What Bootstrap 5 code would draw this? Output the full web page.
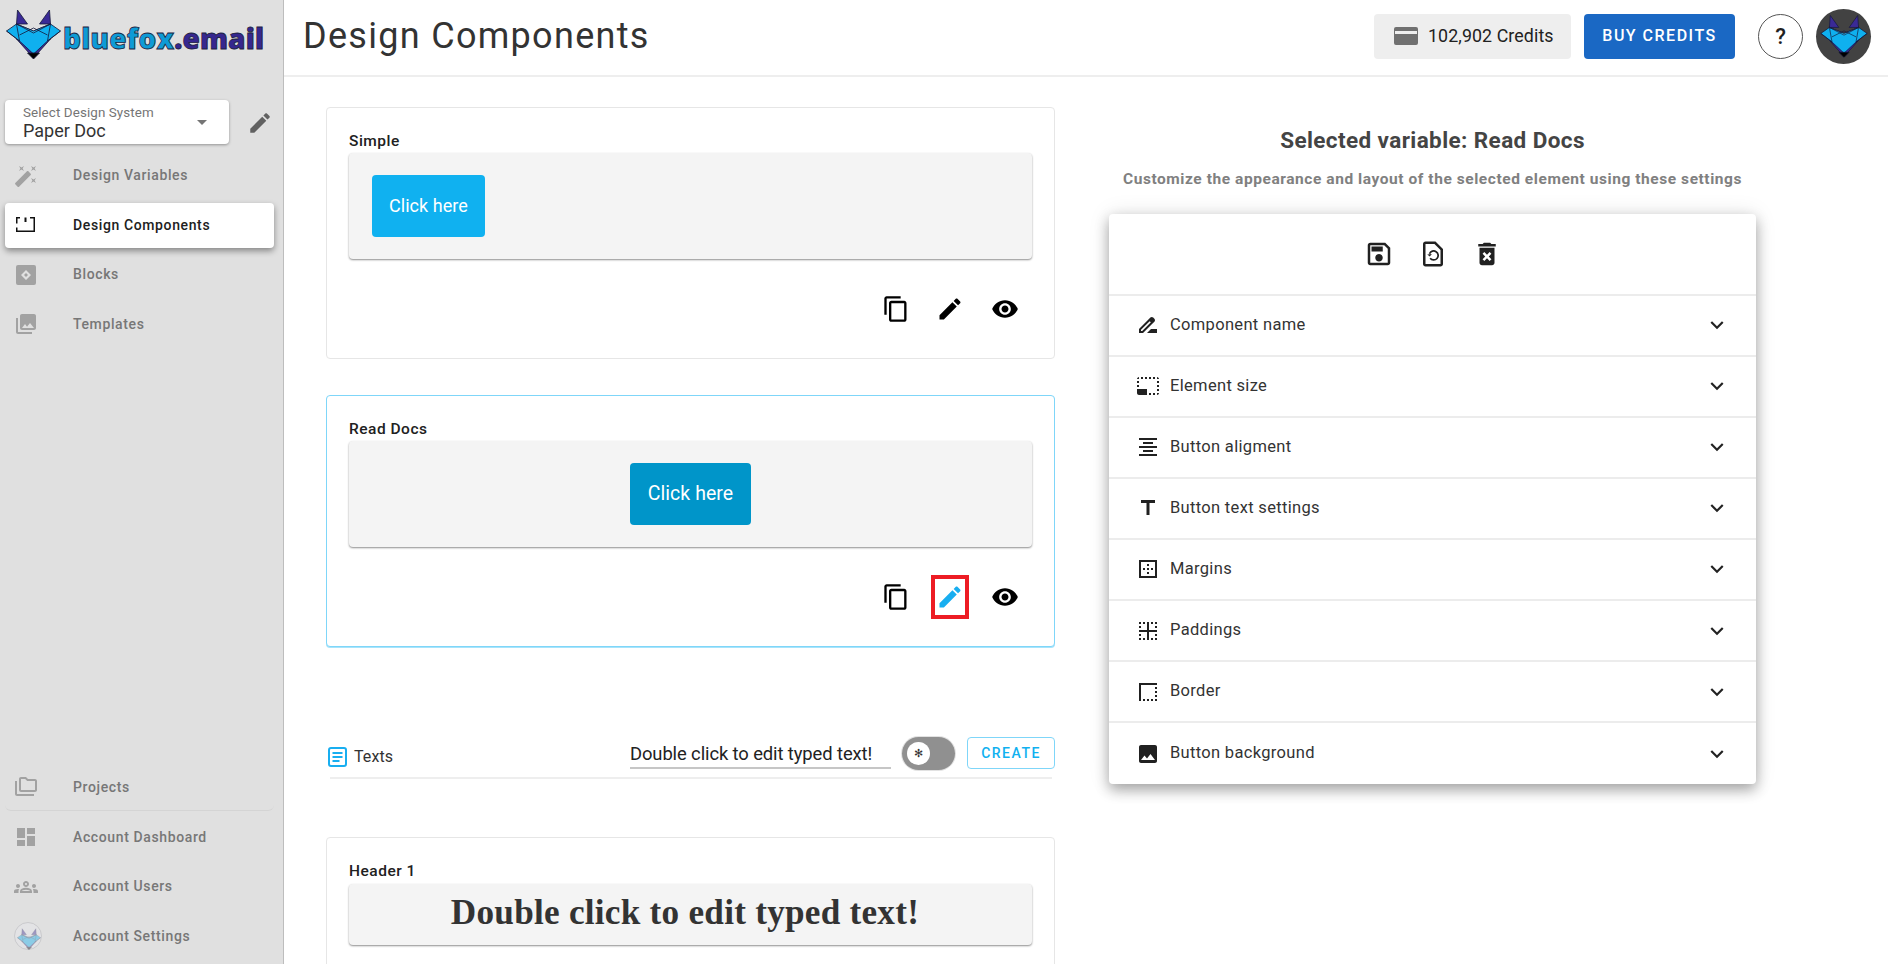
<!DOCTYPE html>
<html lang="en">
<head>
<meta charset="utf-8">
<title>Design Components</title>
<link href="https://cdn.jsdelivr.net/npm/bootstrap@5.3.0/dist/css/bootstrap.min.css" rel="stylesheet">
<style>
html,body{height:100%;background:#fff;overflow:hidden;margin:0}
body{font-family:Roboto,"Liberation Sans",sans-serif;color:#212121}
.app-shell{width:1888px;height:964px;overflow:hidden}
.side{width:284px;flex:none;background:#e0e0e0;border-right:1px solid #bdbdbd;height:964px}
.logo-row{height:76px;padding:9px 0 0 5px;gap:1px}
.logo-row>svg{flex:none}
.logo-txt{font-family:"Open Sans",Lato,sans-serif;font-weight:800;font-size:28px;line-height:1;letter-spacing:.15px;margin-top:15px;color:#0e9bd6;-webkit-text-stroke:.8px #1d2340;white-space:nowrap}
.logo-txt b{color:#36278f;font-weight:800}
.ds-row{height:44px;margin:24px 0 0 5px}
.ds-box{width:224px;height:44px;background:#fff;border-radius:4px;box-shadow:0 1px 3px rgba(0,0,0,.35);padding:5px 18px;position:relative}
.ds-lab{font-size:13.4px;line-height:16px;color:#757575;letter-spacing:.1px}
.ds-val{font-size:18px;line-height:19px;color:#333}
.ds-caret{width:0;height:0;border-left:5.5px solid transparent;border-right:5.5px solid transparent;border-top:5.5px solid #757575;position:absolute;left:192px;top:20px}
.ds-pen{width:26px;height:26px;margin:10px 0 0 18px;fill:#616161}
.nav-it{height:45.5px;margin:4px 9px 0 5px;padding-left:9px;border-radius:4px;font-size:14px;font-weight:500;letter-spacing:.62px;color:#777}
.nav-it svg{width:24px;height:24px;fill:#a2a2a2;flex:none;margin-right:35px}
.nav-it svg.ico-round{width:28px;height:28px;margin-right:31px;opacity:.4}
.nav-it.on{background:#fff;color:#212121;box-shadow:0 3px 6px rgba(0,0,0,.4)}
.nav-it.on svg{fill:#111}
.nav-first{margin-top:9px}
.nav-sep{border-bottom:1px solid #d4d4d4;border-radius:0 0 6px 6px}
.side-gap{flex:1}
.nav-low{margin-bottom:5px}
.top-bar{height:77px;border-bottom:2px solid #eee;padding:0 17px 0 19px;flex:none}
.page-title{font-size:36px;font-weight:400;letter-spacing:1.3px;color:#333;margin:-4px auto 0 0;line-height:1}
.chip{height:45px;width:197px;background:#eee;border-radius:4px;font-size:17.8px;letter-spacing:.1px;color:#212121;padding-left:20px;margin-top:-3px}
.chip svg{width:24px;height:20px;fill:#707070;margin-right:10px}
.buy{width:151px;height:45px;margin:-3px 23px 0 13px;background:#1a68c4;color:#fff;border:0;border-radius:4px;font-size:16px;font-weight:500;letter-spacing:1.5px;padding:0}
.buy:hover{background:#1a68c4;color:#fff}
.help{width:45px;height:45px;border:1px solid #555;border-radius:50%;font-size:22px;font-weight:500;color:#212121;margin:-3px 13px 0 0;background:#fff}
.ava{width:55px;height:55px;border-radius:50%;background:#424242;margin-top:-3px}
.ava svg{width:48px;height:48px}
.body-wrap{padding:30px 0 0 42px;gap:54px}
.left-col{width:729px;flex:none}
.right-col{width:647px;flex:none}
.comp-card{height:252px;border:1px solid #e6e6e6;border-radius:4px;padding:0 22px 0 22px;margin-bottom:36px;background:#fff}
.comp-card.sel{border-color:#7fd6f9;box-shadow:0 1px 0 #a8e4fb}
.comp-lab{height:45px;padding-top:22.5px;font-size:15.5px;line-height:20px;font-weight:500;letter-spacing:.5px;color:#212121}
.stage{height:106px;width:683px;background:#f4f4f4;border-radius:4px;box-shadow:0 1px 2px rgba(0,0,0,.45);padding:22px 23px}
.click-btn{height:62px;background:#10b1f0;color:#fff;border:0;border-radius:4px;font-size:18px;padding:0 17px 2px;letter-spacing:.05px}
.click-btn.dark{background:#0095c9;padding:0 17.5px;font-size:19.5px}
.click-btn:hover{color:#fff;background:#10b1f0}
.click-btn.dark:hover{background:#0095c9}
.tools{height:44px;margin-top:28px}
.tool-slot{width:54.5px;height:44px}
.tool-slot svg{width:28px;height:28px;fill:#000}
.tool-red{width:38px;height:44px;border:4px solid #ed1c24}
.tool-red svg{fill:#18aef0}
.txt-row{height:40px;margin-top:90px;padding:0 0 0 2px}
.txt-row-line{height:2px;background:#eee;margin:0 3px 58px 4px}
.txt-ic{width:19px;height:20px;margin-right:7px;margin-top:10px}
.txt-name{font-size:16px;line-height:20px;letter-spacing:.1px;margin-top:10px;color:#333}
.typed{width:261px;height:30px;margin-top:1.5px;margin-left:auto;border-bottom:2px solid #c6c6c6;font-size:18.4px;letter-spacing:-.1px;line-height:29px;color:#222;white-space:nowrap}
.tog{width:53px;height:33px;border-radius:17px;background:#909090;margin:0 12px 0 11px;position:relative;box-shadow:0 0 0 1px #e2e2e2;flex:none}
.tog i{position:absolute;left:5px;top:5px;width:23px;height:23px;border-radius:50%;background:#fff;color:#333;font-style:normal;font-size:11px;line-height:23px;text-align:center}
.create{width:88px;height:32px;padding:0;border:1px solid #7fd6f9;color:#10b1f0;background:#fff;border-radius:4px;font-size:14px;font-weight:500;letter-spacing:1.5px}
.create:hover{color:#10b1f0;background:#fff;border-color:#7fd6f9}
.hdr-card{height:240px;border:1px solid #e6e6e6;border-radius:4px;padding:0 22px}
.hdr-lab{height:46px}
.stage-h{height:60.5px;width:683px;padding:0 11px 2px 0;background:#f4f4f4;border-radius:4px;box-shadow:0 1px 2px rgba(0,0,0,.45);font-family:"Liberation Serif",serif;font-weight:700;font-size:35.2px;letter-spacing:.25px;color:#333}
.sel-h{font-size:22.5px;font-weight:700;color:#444;line-height:26px;margin:20px 0 0;letter-spacing:.4px}
.sel-p{font-size:15.5px;font-weight:700;color:#808080;line-height:20px;margin:15.5px 0 0;letter-spacing:.56px}
.panel{margin-top:25px;border-radius:4px;background:#fff;box-shadow:0 6px 14px rgba(0,0,0,.32),0 0 22px rgba(0,0,0,.1);overflow:hidden}
.panel-tools{height:82px;gap:24px;border-bottom:2px solid #ececec}
.panel-tools svg{width:30px;height:30px;fill:#212121}
.opt-row{height:61.1px;padding:0 26px 0 27px;border-bottom:2px solid #ececec;font-size:16.5px;letter-spacing:.32px;color:#333}
.opt-row:last-child{border-bottom:0}
.opt-row>svg:first-child{width:24px;height:24px;fill:#212121;margin-right:10px}
.opt-chev{width:26px;height:26px;fill:#222;margin-left:auto}
</style>
</head>
<body>
<svg width="0" height="0" class="position-absolute">
  <defs>
    <symbol id="fox" viewBox="0 0 56 50">
      <g stroke="#15183a" stroke-width=".8" stroke-linejoin="round">
        <path fill="#3a2a96" d="M12 1 22 15H11zM44 1 45 15H34z"/>
        <path fill="#3a2a96" d="M11 30 28 49 45 30z"/>
        <path fill="#0fb0ef" d="M1 22 11 15 28 22 45 15 55 22 42 32 28 45 14 32z"/>
        <path fill="#26bdf5" d="M11 15 28 24 45 15 28 22z"/>
        <path fill="none" d="M1 22 14 32M55 22 42 32M11 15 14 32M45 15 42 32M14 26 28 19 42 26"/>
        <path fill="#000" d="M22 44H34L28 50z"/>
      </g>
    </symbol>
  </defs>
</svg>
<div class="app-shell d-flex">
  <aside class="side d-flex flex-column">
    <div class="logo-row d-flex align-items-start">
      <svg width="57" height="50" aria-hidden="true"><use href="#fox"/></svg>
      <div class="logo-txt">bluefox<b>.email</b></div>
    </div>
    <div class="ds-row d-flex">
      <div class="ds-box">
        <div class="ds-lab">Select Design System</div>
        <div class="ds-val">Paper Doc</div>
        <span class="ds-caret"></span>
      </div>
      <svg class="ds-pen" viewBox="0 0 24 24"><path d="M3 17.25V21h3.75L17.81 9.94l-3.75-3.75L3 17.25zM20.71 7.04c.39-.39.39-1.02 0-1.41l-2.34-2.34c-.39-.39-1.02-.39-1.41 0l-1.83 1.83 3.75 3.75 1.83-1.83z"/></svg>
    </div>
    <div class="nav-it nav-first d-flex align-items-center"><svg viewBox="0 0 24 24"><path d="M7.5 5.6L10 7 8.6 4.5 10 2 7.5 3.4 5 2l1.4 2.5L5 7zm12 9.8L17 14l1.4 2.5L17 19l2.5-1.4L22 19l-1.4-2.5L22 14zM22 2l-2.5 1.4L17 2l1.4 2.5L17 7l2.5-1.4L22 7l-1.4-2.5zm-7.63 5.29c-.39-.39-1.02-.39-1.41 0L1.29 18.96c-.39.39-.39 1.02 0 1.41l2.34 2.34c.39.39 1.02.39 1.41 0L16.7 11.05c.39-.39.39-1.02 0-1.41l-2.33-2.35z"/></svg>Design Variables</div>
    <div class="nav-it on d-flex align-items-center"><svg viewBox="0 0 24 24"><path d="M2 4h4v1.5H3.5v5H2zM10.5 4.5h2V9h-2zM16 4h5v15H2v-4.5h1.5v3h16V5.5H16z"/></svg>Design Components</div>
    <div class="nav-it d-flex align-items-center"><svg viewBox="0 0 24 24"><path fill-rule="evenodd" d="M4 2h16a2 2 0 0 1 2 2v16a2 2 0 0 1-2 2H4a2 2 0 0 1-2-2V4a2 2 0 0 1 2-2zm8 5-5 5 5 5 5-5zm0 3 2 2-2 2-2-2z"/></svg>Blocks</div>
    <div class="nav-it d-flex align-items-center"><svg viewBox="0 0 24 24"><path d="M22 16V4c0-1.1-.9-2-2-2H8c-1.1 0-2 .9-2 2v12c0 1.1.9 2 2 2h12c1.1 0 2-.9 2-2zm-11-4l2.03 2.71L16 11l4 5H8l3-4zM2 6v14c0 1.1.9 2 2 2h14v-2H4V6H2z"/></svg>Templates</div>
    <div class="side-gap"></div>
    <div class="nav-it nav-sep d-flex align-items-center"><svg viewBox="0 0 24 24"><path d="M3 6H1v13c0 1.1.9 2 2 2h17v-2H3V6zm18-2h-7l-2-2H7c-1.1 0-2 .9-2 2v11c0 1.1.9 2 2 2h14c1.1 0 2-.9 2-2V6c0-1.1-.9-2-2-2zm0 11H7V4h4.17l2 2H21v9z"/></svg>Projects</div>
    <div class="nav-it d-flex align-items-center"><svg viewBox="0 0 24 24"><path d="M3 13h8V3H3v10zm0 8h8v-6H3v6zm10 0h8V11h-8v10zm0-18v6h8V3h-8z"/></svg>Account Dashboard</div>
    <div class="nav-it d-flex align-items-center"><svg viewBox="0 0 24 24"><path d="M4 13c1.1 0 2-.9 2-2s-.9-2-2-2-2 .9-2 2 .9 2 2 2zm1.13 1.1c-.37-.06-.74-.1-1.13-.1-.99 0-1.93.21-2.78.58C.48 14.9 0 15.62 0 16.43V18h4.5v-1.61c0-.83.23-1.61.63-2.29zM20 13c1.1 0 2-.9 2-2s-.9-2-2-2-2 .9-2 2 .9 2 2 2zm4 3.43c0-.81-.48-1.53-1.22-1.85C21.93 14.21 20.99 14 20 14c-.39 0-.76.04-1.13.1.4.68.63 1.46.63 2.29V18H24v-1.57zm-7.76-2.78c-1.17-.52-2.61-.9-4.24-.9-1.63 0-3.07.39-4.24.9C6.68 14.13 6 15.21 6 16.39V18h12v-1.61c0-1.18-.68-2.26-1.76-2.74zM8.07 16c.09-.23.13-.39.91-.69.97-.38 1.99-.56 3.02-.56s2.05.18 3.02.56c.77.3.81.46.91.69H8.07zM12 8c.55 0 1 .45 1 1s-.45 1-1 1-1-.45-1-1 .45-1 1-1m0-2c-1.66 0-3 1.34-3 3s1.34 3 3 3 3-1.34 3-3-1.34-3-3-3z"/></svg>Account Users</div>
    <div class="nav-it nav-low d-flex align-items-center"><svg viewBox="0 0 28 28" class="ico-round"><circle cx="14" cy="14" r="13.5" fill="#e8e8ee" stroke="#a9a9af"/><svg x="3" y="5" width="22" height="20"><use href="#fox"/></svg></svg>Account Settings</div>
  </aside>
  <div class="flex-grow-1 d-flex flex-column overflow-hidden">
    <header class="top-bar d-flex align-items-center">
      <h1 class="page-title">Design Components</h1>
      <div class="chip d-flex align-items-center"><svg viewBox="0 0 24 20"><path fill-rule="evenodd" d="M2 1h20a2 2 0 0 1 2 2v14a2 2 0 0 1-2 2H2a2 2 0 0 1-2-2V3a2 2 0 0 1 2-2zm-1 4v3h22V5z"/></svg>102,902 Credits</div>
      <button class="btn buy" type="button">BUY CREDITS</button>
      <div class="help d-flex align-items-center justify-content-center">?</div>
      <div class="ava d-flex align-items-center justify-content-center"><svg viewBox="0 0 56 50"><use href="#fox"/></svg></div>
    </header>
    <div class="body-wrap d-flex flex-grow-1 overflow-hidden">
      <main class="left-col">
        <section class="comp-card">
          <div class="comp-lab">Simple</div>
          <div class="stage d-flex justify-content-start"><button class="btn click-btn" type="button">Click here</button></div>
          <div class="tools d-flex justify-content-end">
            <span class="tool-slot d-flex align-items-center justify-content-center"><svg viewBox="0 0 24 24"><path d="M16 1H4c-1.1 0-2 .9-2 2v14h2V3h12V1zm3 4H8c-1.1 0-2 .9-2 2v14c0 1.1.9 2 2 2h11c1.1 0 2-.9 2-2V7c0-1.1-.9-2-2-2zm0 16H8V7h11v14z"/></svg></span>
            <span class="tool-slot d-flex align-items-center justify-content-center"><svg viewBox="0 0 24 24"><path d="M3 17.25V21h3.75L17.81 9.94l-3.75-3.75L3 17.25zM20.71 7.04c.39-.39.39-1.02 0-1.41l-2.34-2.34c-.39-.39-1.02-.39-1.41 0l-1.83 1.83 3.75 3.75 1.83-1.83z"/></svg></span>
            <span class="tool-slot d-flex align-items-center justify-content-center"><svg viewBox="0 0 24 24"><path d="M12 4.5C7 4.5 2.73 7.61 1 12c1.73 4.39 6 7.5 11 7.5s9.27-3.11 11-7.5c-1.73-4.39-6-7.5-11-7.5zM12 17c-2.76 0-5-2.24-5-5s2.24-5 5-5 5 2.24 5 5-2.24 5-5 5zm0-8c-1.66 0-3 1.34-3 3s1.34 3 3 3 3-1.34 3-3-1.34-3-3-3z"/></svg></span>
          </div>
        </section>
        <section class="comp-card sel">
          <div class="comp-lab">Read Docs</div>
          <div class="stage d-flex justify-content-center"><button class="btn click-btn dark" type="button">Click here</button></div>
          <div class="tools d-flex justify-content-end">
            <span class="tool-slot d-flex align-items-center justify-content-center"><svg viewBox="0 0 24 24"><path d="M16 1H4c-1.1 0-2 .9-2 2v14h2V3h12V1zm3 4H8c-1.1 0-2 .9-2 2v14c0 1.1.9 2 2 2h11c1.1 0 2-.9 2-2V7c0-1.1-.9-2-2-2zm0 16H8V7h11v14z"/></svg></span>
            <span class="tool-slot d-flex align-items-center justify-content-center"><span class="tool-red d-flex align-items-center justify-content-center"><svg viewBox="0 0 24 24"><path d="M3 17.25V21h3.75L17.81 9.94l-3.75-3.75L3 17.25zM20.71 7.04c.39-.39.39-1.02 0-1.41l-2.34-2.34c-.39-.39-1.02-.39-1.41 0l-1.83 1.83 3.75 3.75 1.83-1.83z"/></svg></span></span>
            <span class="tool-slot d-flex align-items-center justify-content-center"><svg viewBox="0 0 24 24"><path d="M12 4.5C7 4.5 2.73 7.61 1 12c1.73 4.39 6 7.5 11 7.5s9.27-3.11 11-7.5c-1.73-4.39-6-7.5-11-7.5zM12 17c-2.76 0-5-2.24-5-5s2.24-5 5-5 5 2.24 5 5-2.24 5-5 5zm0-8c-1.66 0-3 1.34-3 3s1.34 3 3 3 3-1.34 3-3-1.34-3-3-3z"/></svg></span>
          </div>
        </section>
        <div class="txt-row d-flex align-items-start">
          <svg class="txt-ic" viewBox="0 0 19 20"><rect x="1" y="1" width="17" height="18" rx="2" fill="none" stroke="#18aef0" stroke-width="2"/><path d="M4.5 6h10M4.5 10h10M4.5 14h7" stroke="#18aef0" stroke-width="2"/></svg>
          <span class="txt-name">Texts</span>
          <div class="typed">Double click to edit typed text!</div>
          <div class="tog"><i>✻</i></div>
          <button class="btn create" type="button">CREATE</button>
        </div>
        <div class="txt-row-line"></div>
        <section class="hdr-card">
          <div class="comp-lab hdr-lab">Header 1</div>
          <div class="stage-h d-flex align-items-center justify-content-center">Double click to edit typed text!</div>
        </section>
      </main>
      <div class="right-col">
        <h2 class="sel-h text-center">Selected variable: Read Docs</h2>
        <p class="sel-p text-center">Customize the appearance and layout of the selected element using these settings</p>
        <div class="panel">
          <div class="panel-tools d-flex align-items-center justify-content-center">
            <svg viewBox="0 0 24 24"><path d="M17 3H5c-1.11 0-2 .9-2 2v14c0 1.1.89 2 2 2h14c1.1 0 2-.9 2-2V7l-4-4zm2 16H5V5h11.17L19 7.83V19zm-7-7c-1.66 0-3 1.34-3 3s1.34 3 3 3 3-1.34 3-3-1.34-3-3-3zM6 6h9v4H6z"/></svg>
            <svg viewBox="0 0 24 24"><path d="M14 2H6c-1.1 0-2 .9-2 2v16c0 1.1.9 2 2 2h12c1.1 0 2-.9 2-2V8l-6-6zm4 18H6V4h7.17L18 8.83V20z"/><path d="M9.2 11.8a3.6 3.6 0 1 1 .5 3.6" fill="none" stroke="#212121" stroke-width="1.4"/><path d="M7.4 12.4l2 1.6 1.7-2z"/></svg>
            <svg viewBox="0 0 24 24"><path d="M6 19c0 1.1.9 2 2 2h8c1.1 0 2-.9 2-2V7H6v12zm2.46-7.12l1.41-1.41L12 12.59l2.12-2.12 1.41 1.41L13.41 14l2.12 2.12-1.41 1.41L12 15.41l-2.12 2.12-1.41-1.41L10.59 14l-2.13-2.12zM15.5 4l-1-1h-5l-1 1H5v2h14V4z"/></svg>
          </div>
          <div class="opt-row d-flex align-items-center"><svg viewBox="0 0 24 24"><path d="M18.41 5.8L17.2 4.59c-.78-.78-2.05-.78-2.83 0l-2.68 2.68L3 15.96V20h4.04l8.74-8.74 2.63-2.63c.79-.78.79-2.05 0-2.83zM6.21 18H5v-1.21l8.66-8.66 1.21 1.21L6.21 18zM11 20l4-4h6v4H11z"/></svg>Component name<svg class="opt-chev" viewBox="0 0 24 24"><path d="M16.59 8.59L12 13.17 7.41 8.59 6 10l6 6 6-6z"/></svg></div>
          <div class="opt-row d-flex align-items-center"><svg viewBox="0 0 24 24"><path d="M23 15h-2v2h2v-2zm0-4h-2v2h2v-2zm0 8h-2v2c1 0 2-1 2-2zM15 3h-2v2h2V3zm8 4h-2v2h2V7zm-2-4v2h2c0-1-1-2-2-2zM3 21h8v-6H1v4c0 1.1.9 2 2 2zM3 7H1v2h2V7zm12 12h-2v2h2v-2zm4-16h-2v2h2V3zm0 16h-2v2h2v-2zM3 3C2 3 1 4 1 5h2V3zm0 8H1v2h2v-2zm8-8H9v2h2V3zM7 3H5v2h2V3z"/></svg>Element size<svg class="opt-chev" viewBox="0 0 24 24"><path d="M16.59 8.59L12 13.17 7.41 8.59 6 10l6 6 6-6z"/></svg></div>
          <div class="opt-row d-flex align-items-center"><svg viewBox="0 0 24 24"><path d="M7 15v2h10v-2H7zm-4 6h18v-2H3v2zm0-8h18v-2H3v2zm4-6v2h10V7H7zM3 3v2h18V3H3z"/></svg>Button aligment<svg class="opt-chev" viewBox="0 0 24 24"><path d="M16.59 8.59L12 13.17 7.41 8.59 6 10l6 6 6-6z"/></svg></div>
          <div class="opt-row d-flex align-items-center"><svg viewBox="0 0 24 24"><path d="M5 4v3h5.5v12h3V7H19V4z"/></svg>Button text settings<svg class="opt-chev" viewBox="0 0 24 24"><path d="M16.59 8.59L12 13.17 7.41 8.59 6 10l6 6 6-6z"/></svg></div>
          <div class="opt-row d-flex align-items-center"><svg viewBox="0 0 24 24"><path d="M13 7h-2v2h2V7zm0 4h-2v2h2v-2zm4 0h-2v2h2v-2zM3 3v18h18V3H3zm16 16H5V5h14v14zm-6-4h-2v2h2v-2zm-4-4H7v2h2v-2z"/></svg>Margins<svg class="opt-chev" viewBox="0 0 24 24"><path d="M16.59 8.59L12 13.17 7.41 8.59 6 10l6 6 6-6z"/></svg></div>
          <div class="opt-row d-flex align-items-center"><svg viewBox="0 0 24 24"><path d="M3 21h2v-2H3v2zm4 0h2v-2H7v2zM5 7H3v2h2V7zM3 17h2v-2H3v2zM9 3H7v2h2V3zM5 3H3v2h2V3zm12 0h-2v2h2V3zm2 6h2V7h-2v2zm0-6v2h2V3h-2zm-4 18h2v-2h-2v2zM13 3h-2v8H3v2h8v8h2v-8h8v-2h-8V3zm6 18h2v-2h-2v2zm0-4h2v-2h-2v2z"/></svg>Paddings<svg class="opt-chev" viewBox="0 0 24 24"><path d="M16.59 8.59L12 13.17 7.41 8.59 6 10l6 6 6-6z"/></svg></div>
          <div class="opt-row d-flex align-items-center"><svg viewBox="0 0 24 24"><path d="M15 21h2v-2h-2v2zm4 0h2v-2h-2v2zM7 21h2v-2H7v2zm4 0h2v-2h-2v2zm8-4h2v-2h-2v2zm0-4h2v-2h-2v2zM3 3v18h2V5h16V3H3zm16 6h2V7h-2v2z"/></svg>Border<svg class="opt-chev" viewBox="0 0 24 24"><path d="M16.59 8.59L12 13.17 7.41 8.59 6 10l6 6 6-6z"/></svg></div>
          <div class="opt-row d-flex align-items-center"><svg viewBox="0 0 24 24"><path d="M21 19V5c0-1.1-.9-2-2-2H5c-1.1 0-2 .9-2 2v14c0 1.1.9 2 2 2h14c1.1 0 2-.9 2-2zM8.5 13.5l2.5 3.01L14.5 12l4.5 6H5l3.5-4.5z"/></svg>Button background<svg class="opt-chev" viewBox="0 0 24 24"><path d="M16.59 8.59L12 13.17 7.41 8.59 6 10l6 6 6-6z"/></svg></div>
        </div>
      </div>
    </div>
  </div>
</div>
<script src="https://cdn.jsdelivr.net/npm/bootstrap@5.3.0/dist/js/bootstrap.bundle.min.js"></script>
</body>
</html>
